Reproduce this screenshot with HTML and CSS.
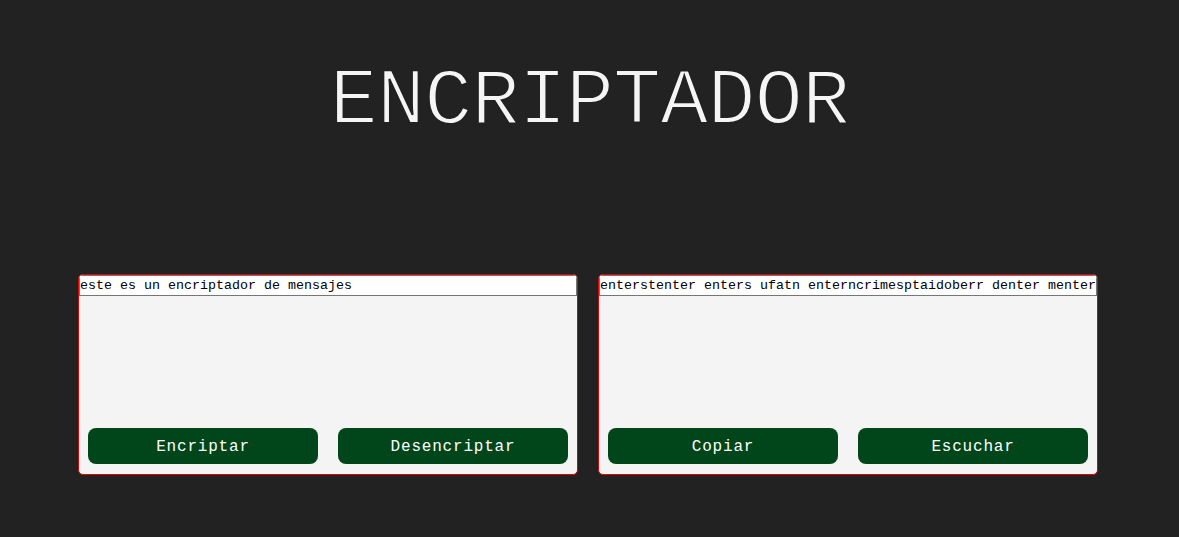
FILE: index.html
```html
<!DOCTYPE html>
<html lang="es">
<head>
<meta charset="utf-8">
<title>Encriptador</title>
<link rel="stylesheet" href="styles.css">
</head>
<body>
<header class="header">
  <h1 class="title">ENCRIPTADOR</h1>
</header>
<main class="panels">
  <section class="panel">
    <input class="field" type="text" value="este es un encriptador de mensajes">
    <div class="actions">
      <button class="btn">Encriptar</button>
      <button class="btn">Desencriptar</button>
    </div>
  </section>
  <section class="panel">
    <input class="field" type="text" value="enterstenter enters ufatn enterncrimesptaidoberr denter mentersaijenters" readonly>
    <div class="actions">
      <button class="btn">Copiar</button>
      <button class="btn">Escuchar</button>
    </div>
  </section>
</main>
</body>
</html>
```

FILE: styles.css
```css
html, body {
  margin: 0;
  padding: 0;
}
body {
  background: #222222;
  min-height: 537px;
  font-family: "Liberation Mono", "DejaVu Sans Mono", monospace;
}
.header {
  display: flex;
  justify-content: center;
  padding-top: 62px;
}
.title {
  margin: 0;
  font-family: "Liberation Mono", monospace;
  font-weight: 400;
  font-size: 80px;
  line-height: 80px;
  color: #f5f5f5;
  letter-spacing: -0.8px;
  -webkit-text-stroke: 2px #222222;
}
.panels {
  display: flex;
  justify-content: center;
  gap: 20px;
  margin-top: 132px;
  padding-right: 3px;
}
.panel {
  box-sizing: border-box;
  width: 500px;
  height: 201px;
  border: 1px solid #e00000;
  border-radius: 5px;
  background: #f4f4f4;
  display: flex;
  flex-direction: column;
  justify-content: space-between;
  overflow: hidden;
}
.field {
  box-sizing: border-box;
  width: 100%;
  height: 21px;
  margin: 0;
  padding: 1px 0;
  border: 1px solid #767676;
  background: #ffffff;
  font-family: "Liberation Mono", "DejaVu Sans Mono", monospace;
  font-size: 13.333px;
  color: #000;
  outline: none;
}
.actions {
  display: flex;
  gap: 20px;
  padding: 0 9px 10px;
}
.btn {
  flex: 1;
  height: 36px;
  border: none;
  border-radius: 8px;
  background: #00461a;
  color: #ffffff;
  font-family: "Liberation Mono", monospace;
  font-size: 16px;
  letter-spacing: 0.8px;
  padding-top: 2px;
  cursor: pointer;
}
```
